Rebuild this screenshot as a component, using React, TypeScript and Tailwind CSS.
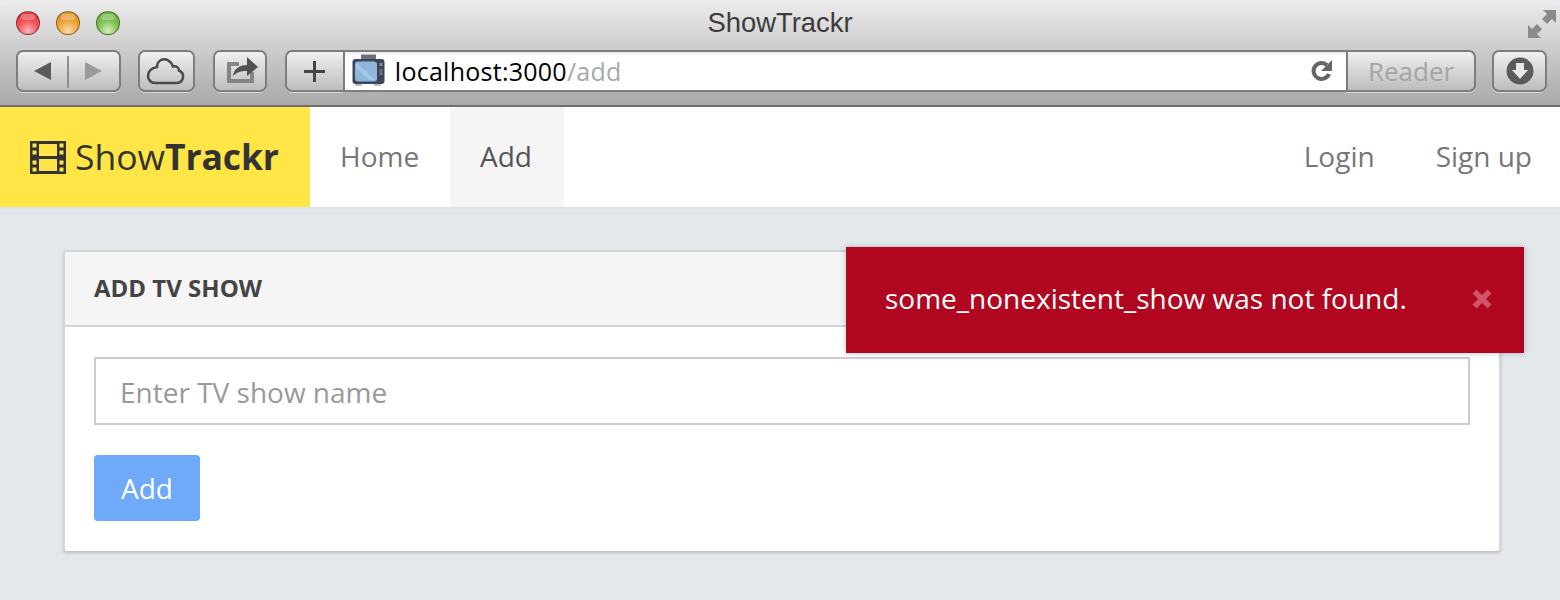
import React from 'react'

const chromeButton =
  'flex h-[42px] items-center justify-center rounded-[7px] border-2 border-[#7d7d7d] bg-gradient-to-b from-[#f0f0f0] to-[#bdbdbd] shadow-[0_1px_0_rgba(255,255,255,0.5)]'

function TrafficLight({ color }: { color: string }) {
  return (
    <div className={`relative h-6 w-6 overflow-hidden rounded-full border border-black/40 ${color}`}>
      <div className="absolute left-1 top-0.5 h-1.5 w-3.5 rounded-full bg-white/25" />
    </div>
  )
}

function FilmIcon() {
  return (
    <svg width="36" height="33" viewBox="0 0 36 33" className="shrink-0 text-[#333]">
      <path
        fill="currentColor"
        fillRule="evenodd"
        d="M0 0h36v33H0zM2.500 2.500v4h4v-4zM2.500 9.500v4h4v-4zM2.500 19.500v4h4v-4zM2.500 26.500v4h4v-4zM29.500 2.500v4h4v-4zM29.500 9.500v4h4v-4zM29.500 19.500v4h4v-4zM29.500 26.500v4h4v-4zM9 3v12h18V3zM9 18v12h18V18z"
      />
    </svg>
  )
}

function TvIcon() {
  return (
    <svg width="34" height="34" viewBox="0 0 34 34" className="shrink-0">
      <rect x="9" y="0.500" width="15" height="5" fill="#6b7078" />
      <rect x="3" y="29" width="7" height="3" rx="1" fill="#b9bcc0" />
      <rect x="22" y="29" width="7" height="3" rx="1" fill="#b9bcc0" />
      <rect x="0.500" y="5" width="32" height="25" rx="3" fill="#3d4658" />
      <rect x="3" y="7.500" width="22" height="20" rx="3" fill="#8fb7dc" />
      <path d="M4 8l19 18h-6L4 14z" fill="#a5c6e3" />
      <rect x="27.500" y="9" width="3" height="3" fill="#8a8f99" />
      <rect x="27.500" y="15" width="3" height="6" fill="#6d7380" />
    </svg>
  )
}

export default function App() {
  return (
    <div className="relative h-[600px] w-[1560px] overflow-hidden bg-[#e4e7ec] font-['Open_Sans',sans-serif]">
      {/* Safari chrome */}
      <div className="h-[107px] rounded-t-[8px] border-b-2 border-[#6f6f6f] bg-gradient-to-b from-[#ececec] to-[#a9a9a9]">
        <div className="mb-1 flex h-[46px] items-center justify-between pl-4 pr-[3px]">
          <div className="flex w-[116px] gap-4">
            <TrafficLight color="bg-[radial-gradient(circle_at_50%_85%,#f8b8bc_0%,#f4565c_45%,#d9303a_100%)]" />
            <TrafficLight color="bg-[radial-gradient(circle_at_50%_85%,#fbdcae_0%,#f0a63c_45%,#d98a24_100%)]" />
            <TrafficLight color="bg-[radial-gradient(circle_at_50%_85%,#d5efc0_0%,#82c455_45%,#5ea838_100%)]" />
          </div>
          <span className="font-['Liberation_Sans',sans-serif] text-[27.400px] leading-none text-[#3c3c3c]">ShowTrackr</span>
          <svg width="30" height="30" viewBox="0 0 30 30" className="mt-[2px] w-[129px] text-[#8a8a8a]" preserveAspectRatio="xMaxYMid meet">
            <path fill="currentColor" d="M16 1h13v13l-4-4-5 5-5-5 5-5zM1 16l4 4 5-5 5 5-5 5 4 4H1z" />
          </svg>
        </div>

        <div className="flex items-center pl-4 pr-[13px]">
          <div className={`${chromeButton} w-[105px]`}>
            <svg width="100" height="36" viewBox="0 0 100 36">
              <path d="M16 18l17-9v18z" fill="#5a5a5a" />
              <rect x="49" y="3" width="2" height="32" fill="#8f8f8f" />
              <path d="M84 18L67 9v18z" fill="#9a9a9a" />
            </svg>
          </div>
          <div className={`${chromeButton} ml-[17px] w-[57px]`}>
            <svg width="40" height="28" viewBox="0 0 40 28" fill="none" stroke="#4b4b4b" strokeWidth="2.500">
              <path d="M9 26h22a6.500 6.500 0 0 0 2-12.500c0-3-3-5-6-4C25 4 20 1 15 3c-3 1.500-4 4-4 7-5 1-9 4-9 9 0 4 3 7 7 7z" />
            </svg>
          </div>
          <div className={`${chromeButton} ml-[18px] w-[54px]`}>
            <svg width="38" height="28" viewBox="0 0 38 28">
              <path d="M6 5h12v4H10v13h19v-7h4v11H6z" fill="#858585" />
              <path d="M26 0l11 10-11 9v-5c-6 0-10 1-14 5 1-7 6-11 14-11z" fill="#525252" />
            </svg>
          </div>
          <div className={`${chromeButton} ml-[18px] w-[58px] rounded-r-none border-r-0`}>
            <svg width="21" height="21" viewBox="0 0 21 21">
              <path d="M9 0h3v9h9v3h-9v9H9v-9H0V9h9z" fill="#444" />
            </svg>
          </div>
          <div className="flex h-[42px] w-[1004px] items-center border-y-2 border-l-2 border-[#7d7d7d] bg-white pl-[7px] pr-[12px] shadow-[inset_0_2px_2px_rgba(0,0,0,0.08)]">
            <TvIcon />
            <span className="ml-[9px] flex-1 text-[25px] leading-none tracking-[0.26px] text-black">
              localhost:3000<span className="text-[#a9a9a9]">/add</span>
            </span>
            <svg width="24" height="24" viewBox="0 0 24 24" fill="none">
              <path d="M19 15a8 8 0 1 1-2-9" stroke="#666" strokeWidth="4" />
              <path d="M22 1v11H11z" fill="#666" />
            </svg>
          </div>
          <div className={`${chromeButton} w-[130px] rounded-l-none text-[26px] text-[#a5a5a5]`}>Reader</div>
          <div className={`${chromeButton} ml-[16px] w-[55px]`}>
            <svg width="28" height="28" viewBox="0 0 28 28">
              <circle cx="14" cy="14" r="13.500" fill="#5c5c5c" />
              <path d="M10 6h8v7h4l-8 9-8-9h4z" fill="#e8e8e8" />
            </svg>
          </div>
        </div>
      </div>

      {/* Navbar */}
      <nav className="flex h-[102px] items-stretch border-b-2 border-[#dfe2e6] bg-white text-[28px] text-[#777]">
        <div className="flex w-[310px] items-center bg-[#ffe545] pl-[30px] text-[35.500px] text-[#333]">
          <FilmIcon />
          <span className="ml-[9px]">
            Show<span className="font-bold tracking-[-0.15px]">Trackr</span>
          </span>
        </div>
        <a className="flex w-[140px] items-center pb-[3px] pl-[30px]">Home</a>
        <a className="flex w-[114px] items-center bg-[#f5f5f5] pb-[3px] pl-[30px] text-[#555]">Add</a>
        <div className="ml-auto flex items-center gap-[61px] pb-[3px] pr-[28px]">
          <a>Login</a>
          <a>Sign up</a>
        </div>
      </nav>

      {/* Card */}
      <div className="ml-[63px] mt-[41px] w-[1438px] rounded-[3px] border-2 border-b-0 border-[#d0d9da] bg-white shadow-[0_2px_3px_rgba(0,0,0,0.18)]">
        <div className="flex h-[75px] items-center border-b-2 border-[#d0d9da] bg-[#f5f5f5] px-[29px] pb-[2px] text-[24px] font-bold text-[#444]">
          ADD TV SHOW
        </div>
        <div className="px-[29px] pb-[30px] pt-[30px]">
          <input
            readOnly
            placeholder="Enter TV show name"
            className="h-[68px] w-[1376px] border-2 border-[#ccc] bg-white px-6 pt-[2px] text-[28px] text-[#555] placeholder:text-[#999] focus:outline-none"
          />
          <button className="mt-[30px] flex h-[66px] w-[106px] items-center justify-center rounded-[4px] bg-[#6fa9f7] text-[28px] text-white">
            Add
          </button>
        </div>
      </div>

      {/* Toast */}
      <div className="absolute left-[846px] top-[247px] flex h-[106px] w-[678px] items-center bg-[#b0061f] pb-1 pl-[39px] pr-8 text-[28px] text-white shadow-[0_0_6px_rgba(0,0,0,0.25)]">
        <span className="flex-1">some_nonexistent_show was not found.</span>
        <svg width="20" height="20" viewBox="0 0 20 20" className="mt-[2px] text-[#cf5467]">
          <path stroke="currentColor" strokeWidth="5.500" d="M2.500 2.500l15 15M17.500 2.500l-15 15" />
        </svg>
      </div>
    </div>
  )
}
